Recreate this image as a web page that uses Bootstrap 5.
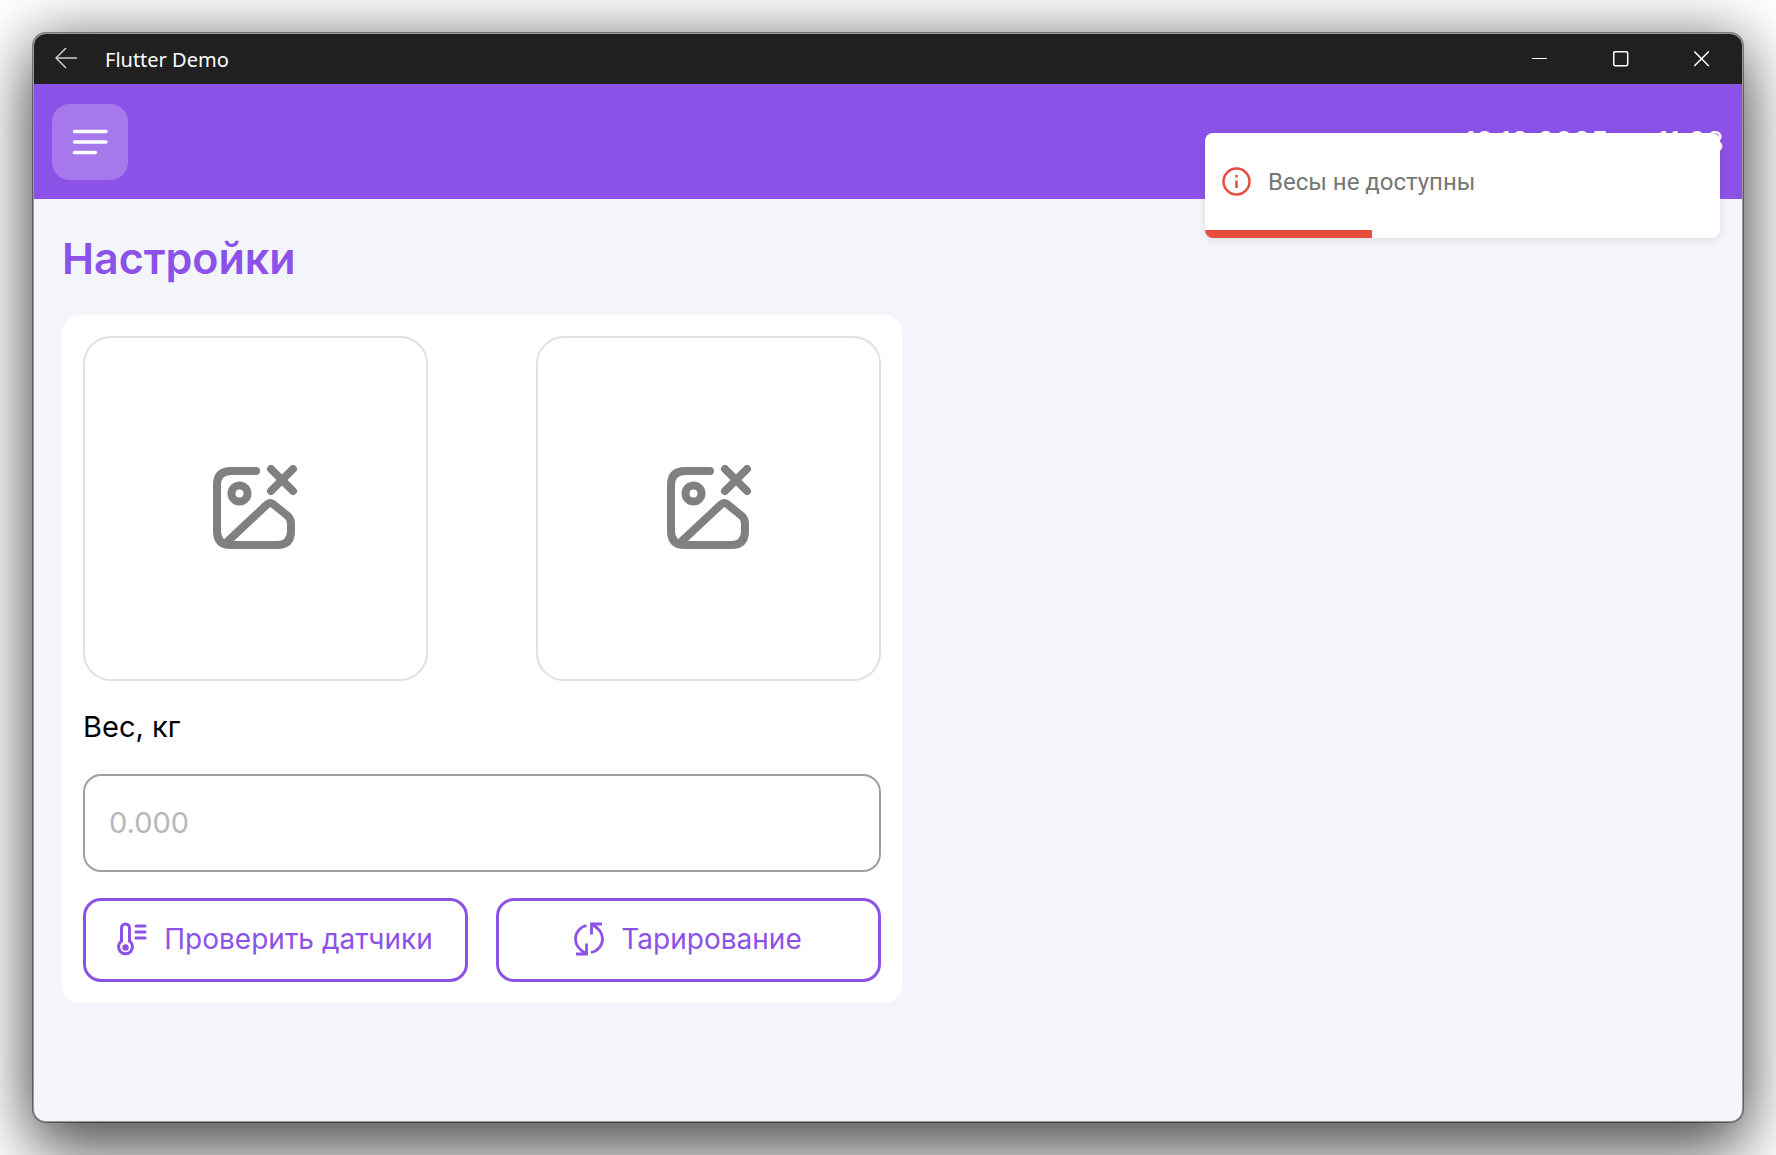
<!DOCTYPE html>
<html lang="ru">
<head>
<meta charset="utf-8">
<meta name="viewport" content="width=device-width, initial-scale=1">
<title>Flutter Demo</title>
<link href="https://cdn.jsdelivr.net/npm/bootstrap@5.3.0/dist/css/bootstrap.min.css" rel="stylesheet">
<style>
  :root { --accent: #8c52e8; --danger-red: #e74c3c; }
  body { font-family: Inter, "Noto Sans", sans-serif; background: #fff; min-height: 100vh; padding: 32px; overflow-x: hidden; }
  .app-window {
    border: 2px solid rgba(0, 0, 0, .4); border-radius: 14px; background: #f4f5fb; background-clip: padding-box;
    box-shadow: 0 34px 64px 0 rgba(0, 0, 0, .52), 0 0 60px 0 rgba(0, 0, 0, .4);
  }
  .title-bar { height: 50px; background: #202020; border-radius: 12px 12px 0 0; font-family: "Noto Sans", sans-serif; color: #fff; }
  .win-title { font-size: 20px; line-height: 28px; padding: 2px 0 0 7px; }
  .win-btn { width: 81px; height: 50px; background: none; border: 0; padding: 0; color: #fff; }
  .back-btn { width: 64px; height: 50px; background: none; border: 0; padding: 0; color: #ccc; }
  .top-bar { height: 115px; background: var(--accent); padding: 0 18px; color: #fff; }
  .menu-btn { width: 76px; height: 76px; border: 0; border-radius: 18px; background: #a678ec; color: #fff; padding: 0; }
  .clock { font-size: 29px; line-height: 34px; }
  .page-title { font-size: 43px; line-height: 52px; font-weight: 600; color: var(--accent); }
  .settings-body { padding: 33px 28px; }
  .settings-panel { width: 50.85%; background: #fff; border-radius: 18px; padding: 21px; margin-top: 31px; }
  .photo-tile { width: 43.2%; aspect-ratio: 1; border: 2px solid #e0e0e0; border-radius: 28px; color: #808080; }
  .field-label { font-size: 29px; line-height: 34px; color: #000; margin: 29px 0 30px; }
  .weight-input { height: 98px; border: 2px solid #9e9e9e; border-radius: 18px; font-size: 29px; padding: 0 24px; }
  .weight-input::placeholder { color: #b8b8b8; opacity: 1; }
  .actions { gap: 28px; margin-top: 26px; }
  .action-btn { flex: 1 1 0; gap: 16px; height: 84px; border: 3px solid var(--accent); border-radius: 18px; color: var(--accent); font-size: 28px; background: #fff; padding: 0 2px 2px 0; }
  .toast-card { top: 133px; right: 56px; width: 515px; background: #fff; border-radius: 8px; box-shadow: 0 2px 8px rgba(0, 0, 0, .1); color: #767676; font-family: Roboto, sans-serif; font-size: 24px; overflow: hidden; }
  .toast-row { height: 97px; padding: 0 15px; gap: 16px; }
  .toast-timer { height: 8px; background: var(--danger-red); }
  svg { display: block; }
</style>
<script src="https://cdn.jsdelivr.net/npm/bootstrap@5.3.0/dist/js/bootstrap.bundle.min.js"></script>
</head>
<body class="d-flex flex-column">
<div class="app-window flex-grow-1 d-flex flex-column">
  <header class="title-bar d-flex align-items-center">
    <button class="back-btn d-flex align-items-center justify-content-center" type="button" aria-label="Назад">
      <svg width="22" height="22" viewBox="0 0 22 22" fill="none" stroke="currentColor" stroke-width="1.5"><path d="M22 10H1M11 0L1 10l10 10"/></svg>
    </button>
    <div class="win-title flex-grow-1">Flutter Demo</div>
    <button class="win-btn d-flex align-items-center justify-content-center" type="button" aria-label="Свернуть">
      <svg width="16" height="16" viewBox="0 0 16 16" fill="none" stroke="currentColor"><path d="M0 7.500h15"/></svg>
    </button>
    <button class="win-btn d-flex align-items-center justify-content-center" type="button" aria-label="Развернуть">
      <svg width="16" height="16" viewBox="0 0 16 16" fill="none" stroke="currentColor" stroke-width="1.500"><rect x=".7" y=".7" width="14" height="14" rx="1.500"/></svg>
    </button>
    <button class="win-btn d-flex align-items-center justify-content-center" type="button" aria-label="Закрыть">
      <svg width="16" height="16" viewBox="0 0 16 16" fill="none" stroke="currentColor" stroke-width="1.500"><path d="M.3.5l14.500 14.500m0-14.500L.3 15"/></svg>
    </button>
  </header>
  <nav class="top-bar d-flex align-items-center justify-content-between">
    <button class="menu-btn d-flex align-items-center justify-content-center" type="button" aria-label="Меню">
      <svg width="36" height="26" viewBox="0 0 36 26" fill="none" stroke="currentColor" stroke-width="3.600" stroke-linecap="round"><path d="M2.500 2.500h31.500M2.500 13h31.500M2.500 23.500h21"/></svg>
    </button>
    <div class="clock d-flex gap-5"><span>12.12.2025</span><span>11:28</span></div>
  </nav>
  <main class="settings-body">
    <h1 class="page-title m-0">Настройки</h1>
    <section class="settings-panel">
      <div class="d-flex justify-content-between">
        <div class="photo-tile d-flex align-items-center justify-content-center">
          <svg width="86" height="86" viewBox="0 0 86 86" fill="none" stroke="currentColor" stroke-width="8" stroke-linecap="round" stroke-linejoin="round"><path d="M44 6H19Q5 6 5 20v46Q5 80 19 80h46q14 0 14-14v-7q0-6-5-9.500L61 39q-3-2-6 .5L16 76M59 4l22 22m0-22L59 26"/><circle cx="27.500" cy="28.500" r="8"/></svg>
        </div>
        <div class="photo-tile d-flex align-items-center justify-content-center">
          <svg width="86" height="86" viewBox="0 0 86 86" fill="none" stroke="currentColor" stroke-width="8" stroke-linecap="round" stroke-linejoin="round"><path d="M44 6H19Q5 6 5 20v46Q5 80 19 80h46q14 0 14-14v-7q0-6-5-9.500L61 39q-3-2-6 .5L16 76M59 4l22 22m0-22L59 26"/><circle cx="27.500" cy="28.500" r="8"/></svg>
        </div>
      </div>
      <label class="field-label d-block" for="weight">Вес, кг</label>
      <input class="weight-input form-control" id="weight" type="text" inputmode="decimal" placeholder="0.000">
      <div class="actions d-flex">
        <button class="action-btn btn d-flex align-items-center justify-content-center" type="button">
          <svg width="32" height="36" viewBox="0 0 32 36" fill="none" stroke="currentColor" stroke-width="3"><path d="M5.500 20V7a4 4 0 0 1 8 0v13a7 7 0 1 1-8 0z"/><circle cx="9.500" cy="26.500" r="3.200" fill="currentColor" stroke="none"/><path stroke-linecap="round" d="M20 5h9M20 11h9M20 17h9"/></svg>
          Проверить датчики
        </button>
        <button class="action-btn btn d-flex align-items-center justify-content-center" type="button">
          <svg width="32" height="36" viewBox="0 0 32 36" fill="none" stroke="currentColor" stroke-width="2.800"><path d="M13.500 4.500C7 6 2.500 11.500 2.500 18S6 28 12.500 32.500M3 33h10.500V22.500M18 31.500C25 30 29.500 24.500 29.500 18S26 8 19.500 3.500M29 3H18.500v10.500"/></svg>
          Тарирование
        </button>
      </div>
    </section>
  </main>
</div>
<div class="toast-card position-absolute" role="alert">
  <div class="toast-row d-flex align-items-center">
    <svg width="32" height="32" viewBox="0 0 32 32" fill="none" stroke="#e74c3c" stroke-width="2.500"><circle cx="16.500" cy="15.500" r="13"/><path d="M16.500 14.500V22M16.500 9v2.500"/></svg>
    <span>Весы не доступны</span>
  </div>
  <div class="toast-timer" style="width:32.4%"></div>
</div>
</body>
</html>
